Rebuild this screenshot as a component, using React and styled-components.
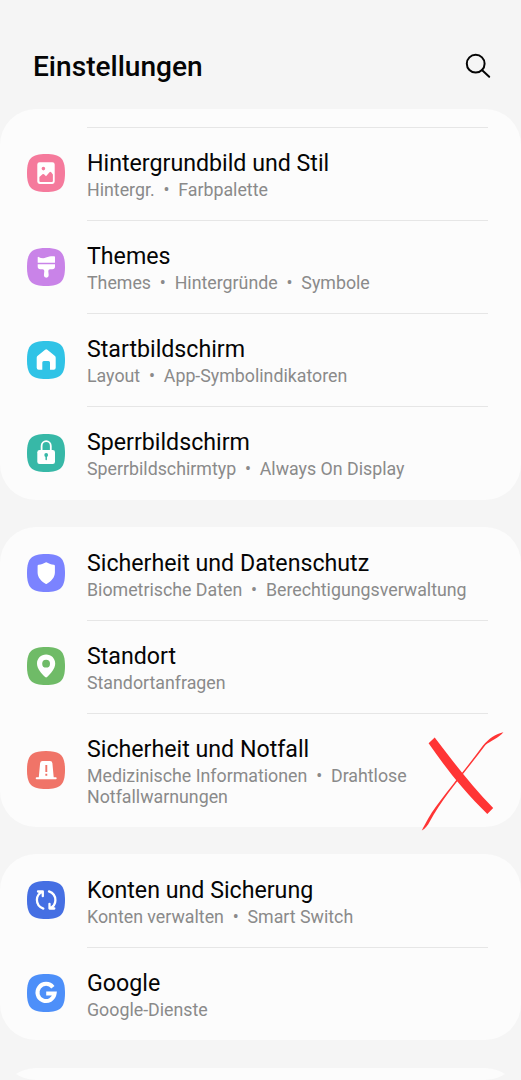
import styled, { createGlobalStyle } from "styled-components"

const displayGroups = [
    { icon: <WallpaperIcon />, color: "#F57A9C", title: "Hintergrundbild und Stil", details: ["Hintergr.", "Farbpalette"] },
    { icon: <BrushIcon />, color: "#C983E8", title: "Themes", details: ["Themes", "Hintergründe", "Symbole"] },
    { icon: <HomeIcon />, color: "#30C3E6", title: "Startbildschirm", details: ["Layout", "App-Symbolindikatoren"] },
    { icon: <LockIcon />, color: "#37B8A7", title: "Sperrbildschirm", details: ["Sperrbildschirmtyp", "Always On Display"] }
]

const securityGroups = [
    { icon: <ShieldIcon />, color: "#7B83FF", title: "Sicherheit und Datenschutz", details: ["Biometrische Daten", "Berechtigungsverwaltung"] },
    { icon: <PinIcon />, color: "#6FBB67", title: "Standort", details: ["Standortanfragen"] },
    { icon: <SirenIcon />, color: "#F07468", title: "Sicherheit und Notfall", details: ["Medizinische Informationen", "Drahtlose\nNotfallwarnungen"], tall: true }
]

const accountGroups = [
    { icon: <SyncIcon />, color: "#456FE3", title: "Konten und Sicherung", details: ["Konten verwalten", "Smart Switch"] },
    { icon: <GoogleIcon />, color: "#4D8FF9", title: "Google", details: ["Google-Dienste"] }
]

export default function App() {

    return (
        <PageContainer>
            <GlobalStyle />
            <Header>
                <h1>Einstellungen</h1>
                <SearchButton aria-label="Suchen">
                    <svg width="26" height="26" viewBox="0 0 26 26" fill="none" stroke="#050505" strokeWidth="2" strokeLinecap="round">
                        <circle cx="10.7" cy="10.7" r="8.9" />
                        <path d="M17.2 17.2L24.2 23.7" />
                    </svg>
                </SearchButton>
            </Header>
            <CardList>
                <Card $continued>
                    <SettingsRows items={displayGroups} continued />
                </Card>
                <Card>
                    <SettingsRows items={securityGroups} />
                    <CrossMark viewBox="0 0 84 100">
                        <path d="M13.7 5.5L7.6 11.3C24 35 42.8 59.3 66.3 81.9L72.2 76C50.6 54 31 28.3 13.7 5.5Z" />
                        <path d="M82.4 .3C75 1.8 68 6.5 62 13.5C42 41 18 68 7.5 86C4.5 91.5 2.5 95 .8 98.4C4 96.8 7 93.5 8.8 89.5C22 65 42 43 64.5 13C69 9.5 78 5.5 82.4 .3Z" />
                    </CrossMark>
                </Card>
                <Card>
                    <SettingsRows items={accountGroups} />
                </Card>
                <div>
                    <CardEdge />
                    <CardEdge $bottom />
                </div>
            </CardList>
        </PageContainer>
    )
}

function SettingsRows({ items, continued }) {
    return items.map((item, index) => (
        <Row key={item.title} $tall={item.tall}>
            <IconTile>
                <svg width="38" height="38" viewBox="0 0 38 38">
                    <path fill={item.color} d="M19 0C33.5 0 38 4.5 38 19S33.5 38 19 38S0 33.5 0 19S4.5 0 19 0Z" />
                    {item.icon}
                </svg>
            </IconTile>
            <RowText $divided={continued || index > 0}>
                <RowTitle>{item.title}</RowTitle>
                <RowDetails>{item.details.join("  •  ")}</RowDetails>
            </RowText>
        </Row>
    ))
}

function WallpaperIcon() {
    return (
        <path fill="#FFF" fillRule="evenodd" d="M12.6 8.3H25.4Q27.7 8.3 27.7 10.6V27.6Q27.7 29.9 25.4 29.9H12.6Q10.3 29.9 10.3 27.6V10.6Q10.3 8.3 12.6 8.3ZM16.4 12.8A1.8 1.8 0 1 0 16.4 16.4A1.8 1.8 0 1 0 16.4 12.8ZM12.4 23L15.5 20.2Q16.3 19.6 17 20.3L19 22.3L22.5 18.3Q23.4 17.4 24.2 18.3L25.9 20.4V27Q25.9 28.1 24.8 28.1H13.5Q12.4 28.1 12.4 27Z" />
    )
}

function BrushIcon() {
    return (
        <g fill="#FFF">
            <path d="M10.7 9.4Q10.7 8.7 11.5 8.9C14 10.2 16.5 10.7 19 9.6C22 8.2 24.5 8 27.2 8.2Q28 8.3 28 9V14.8H10.7Z" />
            <path d="M10.7 16.2H28V18.6Q28 21.2 25.3 21.2H23Q21.3 21.2 21.3 22.9L21.7 27.3Q21.7 29.7 19.3 29.7T16.9 27.3L17.3 22.9Q17.3 21.2 15.6 21.2H13.4Q10.7 21.2 10.7 18.6Z" />
        </g>
    )
}

function HomeIcon() {
    return (
        <path fill="#FFF" d="M18.1 8.8Q19.2 7.9 20.3 8.8L28 15.1Q28.7 15.8 28.7 16.8V26.7Q28.7 28.7 26.7 28.7H23V21.5Q23 20 21.5 20H16.8Q15.3 20 15.3 21.5V28.7H11.7Q9.7 28.7 9.7 26.7V16.8Q9.7 15.8 10.4 15.1Z" />
    )
}

function LockIcon() {
    return (
        <g>
            <path fill="none" stroke="#FFF" strokeWidth="1.8" d="M14.6 17V12A4.6 4.9 0 0 1 23.8 12V17" />
            <rect x="10.3" y="16" width="17.7" height="14.1" rx="2.3" fill="#FFF" />
            <circle cx="19.2" cy="21" r="1.9" fill="#37B8A7" />
            <path stroke="#37B8A7" strokeWidth="1.5" strokeLinecap="round" d="M19.2 22V25.5" />
        </g>
    )
}

function ShieldIcon() {
    return (
        <path fill="#FFF" d="M18.5 8.5Q19.2 8.1 19.9 8.5C22 9.7 24.2 10.5 26.8 10.7Q27.9 10.8 27.9 11.9V18.5C27.9 23.5 24 27.4 19.9 29.8Q19.2 30.2 18.5 29.8C14.4 27.4 10.6 23.5 10.6 18.5V11.9Q10.6 10.8 11.7 10.7C14.2 10.5 16.4 9.7 18.5 8.5Z" />
    )
}

function PinIcon() {
    return (
        <path fill="#FFF" fillRule="evenodd" d="M19.1 7.6C24.3 7.6 28.2 11.5 28.2 16.5C28.2 21.9 23.5 26.7 20.1 30.1Q19.1 31 18.1 30.1C14.7 26.7 10 21.9 10 16.5C10 11.5 13.9 7.6 19.1 7.6ZM19.1 12.8A3.9 3.9 0 1 0 19.1 20.6A3.9 3.9 0 1 0 19.1 12.8Z" />
    )
}

function SirenIcon() {
    return (
        <g>
            <path fill="#FFF" d="M15.5 10H23Q25.2 10 25.4 12.2L26.7 26.3H28.7Q29.7 26.3 29.7 27.3T28.7 28.3H9.7Q8.7 28.3 8.7 27.3T9.7 26.3H11.8L13.1 12.2Q13.3 10 15.5 10Z" />
            <path stroke="#F07468" strokeWidth="1.9" d="M19.3 13.9V21M19.3 22.8V24.8" />
        </g>
    )
}

function SyncIcon() {
    return (
        <g fill="none" stroke="#FFF" strokeWidth="2.3" strokeLinecap="round" strokeLinejoin="round">
            <path d="M16.3 27.6C12.5 26.2 9.9 23 9.9 18.8C9.9 15.5 12 12.3 15.5 10.5M11 10.5H15.8V15.2" />
            <path d="M22 10.4C25.8 11.8 28.4 15 28.4 19.2C28.4 22.5 26.3 25.7 22.8 27.5M27.3 27.5H22.5V22.8" />
        </g>
    )
}

function GoogleIcon() {
    return (
        <path fill="none" stroke="#FFF" strokeWidth="4" d="M25.9 13.2A8.6 8.6 0 1 0 27.6 19.6H19.2" />
    )
}

const GlobalStyle = createGlobalStyle`
    body{
        margin: 0;
        background-color: #F5F5F5;
    }
    *{
        box-sizing: border-box;
    }
`
const PageContainer = styled.div`
    width: 100%;
    height: 1080px;
    overflow: hidden;
    background-color: #F5F5F5;
    font-family: Roboto, sans-serif;
`
const Header = styled.header`
    height: 109px;
    padding: 25px 30px 0 33px;
    display: flex;
    justify-content: space-between;
    align-items: center;
    h1{
        margin: 0;
        font-size: 28.1px;
        font-weight: 500;
        line-height: 36px;
        color: #050505;
    }
`
const SearchButton = styled.button`
    height: 26px;
    margin-bottom: 3px;
    padding: 0;
    border: none;
    background: none;
`
const CardList = styled.main`
    display: flex;
    flex-direction: column;
    gap: 27.4px;
`
const Card = styled.section`
    position: relative;
    padding-top: ${props => props.$continued ? "18.2px" : "0"};
    background-color: #FCFCFC;
    border-radius: 36px;
`
const Row = styled.div`
    height: ${props => props.$tall ? "113.6px" : "93.1px"};
    padding: 0 33px 0 27px;
    display: flex;
`
const IconTile = styled.div`
    width: 60px;
    padding-bottom: 0.6px;
    display: flex;
    align-items: center;
    svg{
        display: block;
    }
`
const RowText = styled.div`
    flex: 1;
    padding-top: 18.9px;
    border-top: 1px solid ${props => props.$divided ? "#E6E6E6" : "transparent"};
`
const RowTitle = styled.h2`
    margin: 0;
    font-size: 23.2px;
    font-weight: 400;
    line-height: 32px;
    color: #050505;
`
const RowDetails = styled.p`
    margin: 0;
    padding-top: 1px;
    font-size: 17.8px;
    line-height: 20.8px;
    white-space: pre;
    color: #8A8A8A;
`
const CrossMark = styled.svg`
    position: absolute;
    right: 16px;
    bottom: -5px;
    width: 84px;
    height: 100px;
    fill: #FF3535;
`
const CardEdge = styled.div`
    height: 6px;
    overflow: hidden;
    display: flex;
    align-items: ${props => props.$bottom ? "flex-end" : "flex-start"};
    &::before{
        content: "";
        flex: 1;
        height: 72px;
        flex-shrink: 0;
        background-color: #FCFCFC;
        border-radius: 36px;
    }
`
